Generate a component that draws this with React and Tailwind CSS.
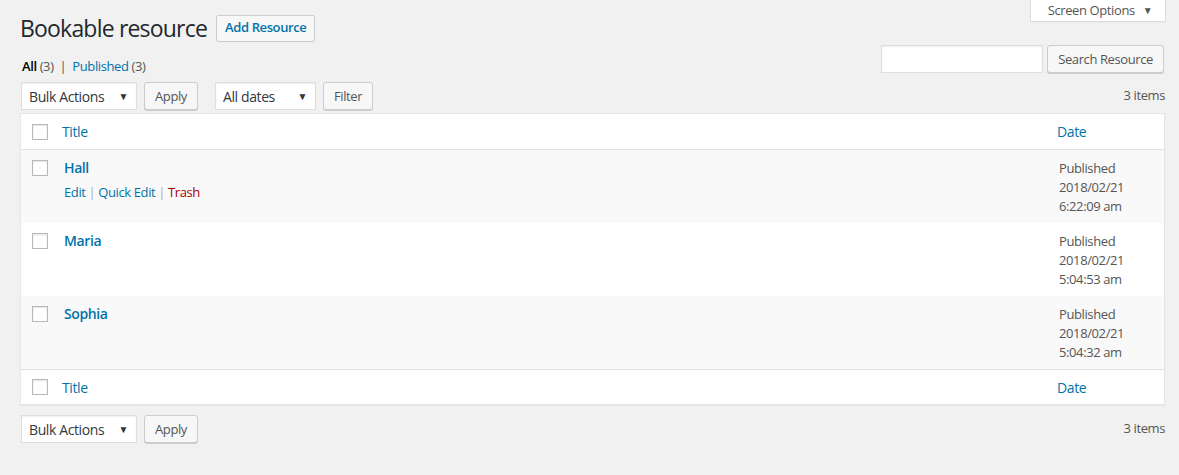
import React from 'react';

const rows = [
  { title: 'Hall', date: '2018/02/21', time: '6:22:09 am', actions: true, alt: true },
  { title: 'Maria', date: '2018/02/21', time: '5:04:53 am', alt: false },
  { title: 'Sophia', date: '2018/02/21', time: '5:04:32 am', alt: true },
];

function Checkbox() {
  return <span className="block w-4 h-4 bg-white border border-[#b4b9be] shadow-[inset_0_1px_2px_rgba(0,0,0,0.1)]" />;
}

function Select({ label, width }) {
  return (
    <div className={`flex items-center justify-between h-7 ${width} bg-white border border-[#ddd] shadow-[inset_0_1px_2px_rgba(0,0,0,0.07)] pl-[7px] pr-[8px] text-[14px] text-[#32373c]`}>
      <span>{label}</span>
      <span className="text-[10px] text-[#333]">▼</span>
    </div>
  );
}

function Button({ children, className = '' }) {
  return (
    <button className={`h-7 px-[10px] bg-[#f7f7f7] border border-[#ccc] rounded-[3px] shadow-[0_1px_0_#ccc] text-[13px] text-[#555] leading-none ${className}`}>
      {children}
    </button>
  );
}

function TableNav({ bottom }) {
  return (
    <div className="flex items-center h-7">
      <Select label="Bulk Actions" width="w-[116px]" />
      <Button className="ml-[7px]">Apply</Button>
      {!bottom && (
        <>
          <div className="ml-[17px]">
            <Select label="All dates" width="w-[101px]" />
          </div>
          <Button className="ml-[7px]">Filter</Button>
        </>
      )}
      <span className="ml-auto text-[13px] text-[#555]">3 items</span>
    </div>
  );
}

export default function App() {
  return (
    <div className="min-h-[475px] bg-[#f1f1f1] pl-5 pr-[14px] text-[13px] text-[#444] tracking-[-0.03em]" style={{ fontFamily: '"Open Sans", "Noto Sans", sans-serif' }}>
      {/* Screen options tab */}
      <div className="flex justify-end">
        <div className="h-[22px] w-[136px] -mr-[1px] bg-white border border-t-0 border-[#ddd] shadow-[0_1px_1px_-1px_rgba(0,0,0,0.1)] flex items-center justify-center gap-[8px] text-[13px] text-[#555] pl-1">
          <span>Screen Options</span>
          <span className="text-[10px]">▼</span>
        </div>
      </div>

      <div className="flex items-center -mt-[8px] h-[28px]">
        <h1 className="text-[23px] text-[#23282d] font-normal leading-none tracking-[-0.035em]">Bookable resource</h1>
        <span className="ml-[9px] h-[27px] px-[8px] flex items-center bg-[#f7f7f7] border border-[#ccc] rounded-[2px] text-[13px] font-semibold text-[#0073aa]">
          Add Resource
        </span>
      </div>

      <div className="flex items-start justify-between mt-[3px] h-[28px]">
        <div className="pt-[12px] pl-[2px] text-[13px] text-[#555]">
          <span className="text-black font-semibold">All</span> (3) <span className="text-[#555] mx-[3px]">|</span>{' '}
          <span className="text-[#0073aa]">Published</span> (3)
        </div>
        <div className="flex items-center gap-[4px] mr-[1px]">
          <div className="w-[162px] h-[28px] bg-white border border-[#ddd] shadow-[inset_0_1px_2px_rgba(0,0,0,0.07)]" />
          <Button>Search Resource</Button>
        </div>
      </div>

      <div className="mt-[9px] pl-[1px]">
        <TableNav />
      </div>

      <div className="mt-[3px] bg-white border border-[#e5e5e5] shadow-[0_1px_1px_rgba(0,0,0,0.04)]">
        <div className="flex items-center h-[36px] border-b border-[#e1e1e1]">
          <div className="w-[41px] pl-[11px]"><Checkbox /></div>
          <span className="text-[14px] text-[#0073aa]">Title</span>
          <span className="ml-auto w-[107px] text-[14px] text-[#0073aa]">Date</span>
        </div>
        {rows.map((r) => (
          <div key={r.title} className={`flex h-[73px] ${r.alt ? 'bg-[#f9f9f9]' : 'bg-white'}`}>
            <div className="w-[43px] pl-[11px] pt-[10px]"><Checkbox /></div>
            <div className="pt-[7px]">
              <div className="text-[14px] font-semibold text-[#0073aa]">{r.title}</div>
              {r.actions && (
                <div className="mt-[5px] text-[13px] text-[#0073aa]">
                  Edit <span className="text-[#aaa]">|</span> Quick Edit <span className="text-[#aaa]">|</span>{' '}
                  <span className="text-[#a00]">Trash</span>
                </div>
              )}
            </div>
            <div className="ml-auto w-[105px] pt-[9px] text-[13px] leading-[19px] text-[#555]">
              <div>Published</div>
              <div>{r.date}</div>
              <div>{r.time}</div>
            </div>
          </div>
        ))}
        <div className="flex items-center h-[35px] border-t border-[#e1e1e1]">
          <div className="w-[41px] pl-[11px]"><Checkbox /></div>
          <span className="text-[14px] text-[#0073aa]">Title</span>
          <span className="ml-auto w-[107px] text-[14px] text-[#0073aa]">Date</span>
        </div>
      </div>

      <div className="mt-[10px] pl-[1px]">
        <TableNav bottom />
      </div>
    </div>
  );
}
